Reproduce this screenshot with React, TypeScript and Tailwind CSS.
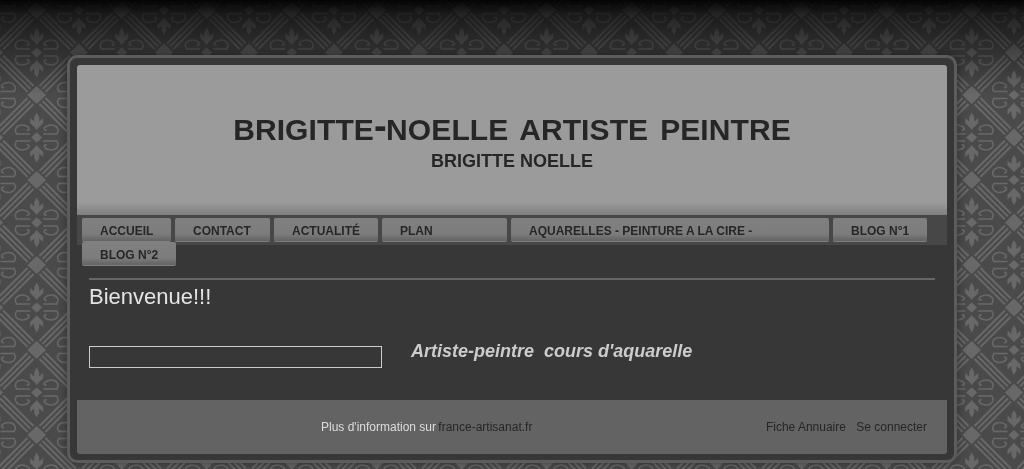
const font = "font-['Liberation_Sans',Arial,sans-serif]";

const menuItems = [
  { label: 'ACCUEIL', width: 'w-[89px]' },
  { label: 'CONTACT', width: 'w-[95px]' },
  { label: 'ACTUALITÉ', width: 'w-[104px]' },
  { label: 'PLAN', width: 'w-[125px]' },
  { label: 'AQUARELLES - PEINTURE A LA CIRE -', width: 'w-[318px]' },
  { label: 'BLOG N°1', width: 'w-[94px]' },
  { label: 'BLOG N°2', width: 'w-[94px]' },
];

const scroll =
  'M-6.5 -3.5 H-21 M-20 -4 C-22.5 -6 -21.5 -10 -18.5 -11.5 C-15 -13.2 -10 -12.5 -8 -10 C-6.8 -8.4 -8 -7 -10 -7.5';

function Ornament({ x, y }: { x: number; y: number }) {
  return (
    <g transform={`translate(${x} ${y})`} fill="#686868">
      <path d="M0 -25 L2.4 -20.5 L2.6 -16 L6.5 -19.5 L6.5 -14.5 L3 -11 L1.4 -9.5 L0 -7.5 L-1.4 -9.5 L-3 -11 L-6.5 -14.5 L-6.5 -19.5 L-2.6 -16 L-2.4 -20.5 Z" />
      <path d="M0 25 L2.4 20.5 L2.6 16 L6.5 19.5 L6.5 14.5 L3 11 L1.4 9.5 L0 7.5 L-1.4 9.5 L-3 11 L-6.5 14.5 L-6.5 19.5 L-2.6 16 L-2.4 20.5 Z" />
      <path d="M0 -5 L5.5 0 L0 5 L-5.5 0 Z" />
      <g fill="none" stroke="#686868" strokeWidth="1.6">
        <path d={scroll} />
        <path d={scroll} transform="scale(-1 1)" />
        <path d={scroll} transform="scale(1 -1)" />
        <path d={scroll} transform="scale(-1 -1)" />
      </g>
    </g>
  );
}

function Strips({ x, y, rot }: { x: number; y: number; rot: number }) {
  return (
    <g transform={`translate(${x} ${y}) rotate(${rot})`} fill="#686868">
      <rect x="-21.5" y="-5.2" width="43" height="2" />
      <rect x="-21.5" y="-1" width="43" height="2" />
      <rect x="-21.5" y="3.2" width="43" height="2" />
    </g>
  );
}

function Wallpaper() {
  return (
    <svg className="absolute inset-0 h-full w-full" aria-hidden="true">
      <defs>
        <pattern id="damask" x="-6" y="10" width="85" height="85" patternUnits="userSpaceOnUse">
          <rect width="85" height="85" fill="#4a4a4a" />
          <Strips x={21.3} y={21.2} rot={-45} />
          <Strips x={63.7} y={21.2} rot={45} />
          <Strips x={21.3} y={63.7} rot={45} />
          <Strips x={63.7} y={63.7} rot={-45} />
          <path d="M42.7 -9 L52 0 L42.7 9 L33.4 0 Z M42.7 76 L52 85 L42.7 94 L33.4 85 Z M0 33.5 L9 42.5 L0 51.5 L-9 42.5 Z M85 33.5 L94 42.5 L85 51.5 L76 42.5 Z" fill="#686868" />
          <Ornament x={42.7} y={42.5} />
          <Ornament x={0} y={0} />
          <Ornament x={85} y={0} />
          <Ornament x={0} y={85} />
          <Ornament x={85} y={85} />
        </pattern>
        <linearGradient id="fade" x1="0" y1="0" x2="0" y2="1">
          <stop offset="0" stopColor="#000" stopOpacity="0.95" />
          <stop offset="0.15" stopColor="#000" stopOpacity="0.65" />
          <stop offset="1" stopColor="#000" stopOpacity="0" />
        </linearGradient>
      </defs>
      <rect width="100%" height="100%" fill="url(#damask)" />
      <rect width="100%" height="95" fill="url(#fade)" />
    </svg>
  );
}

export default function App() {
  return (
    <div className={`relative h-[469px] w-[1024px] overflow-hidden grayscale ${font}`}>
      <Wallpaper />
      <div className="relative pt-[55px]">
        <div className="mx-auto h-[408px] w-[890px] rounded-[10px] border-[3px] border-[#5c5c5c] bg-[#373737] p-[7px] shadow-[0_0_10px_rgba(0,0,0,0.4)]">
          <header className="h-[150px] rounded-t-[3px] bg-[linear-gradient(#9b9b9b_0,#9b9b9b_137px,#7e7e7e_150px)] pt-[47px] text-center text-[#262626]">
            <h1 className="text-[30px] font-bold leading-[36px] tracking-[0.1px] [word-spacing:3.5px]">
              BRIGITTE<span className="align-[1px] text-[38px] leading-[0] tracking-[-0.5px]">-</span>NOELLE ARTISTE PEINTRE
            </h1>
            <h2 className="text-[18px] font-bold leading-[26px]">BRIGITTE NOELLE</h2>
          </header>

          <nav className="h-[30px] bg-[#474747]">
            <ul className="flex w-[860px] flex-wrap gap-x-[4px] pl-[5px] pt-[3px]">
              {menuItems.map((item) => (
                <li
                  key={item.label}
                  className={`h-[24px] ${item.width} rounded-[2px] border-b border-[#808080] bg-[linear-gradient(#808080_0,#7c7c7c_16px,#626262_23px)] pl-[18px] text-[12px] font-bold leading-[26px] text-[#262626]`}
                >
                  {item.label}
                </li>
              ))}
            </ul>
          </nav>

          <main className="h-[155px] px-[12px] pt-[33px]">
            <div className="h-[2px] bg-[#666]" />
            <h3 className="mt-[3px] text-[22px] leading-[27px] text-[#e4e4e4]">Bienvenue!!!</h3>
            <div className="mt-[31px] flex items-start">
              <div className="mt-[5px] h-[22px] w-[293px] border border-[#ccc]" />
              <p className="ml-[29px] whitespace-pre text-[18px] font-bold italic leading-[20px] text-[#ccc]">Artiste-peintre  cours d'aquarelle</p>
            </div>
          </main>

          <footer className="flex h-[54px] items-center rounded-b-[3px] bg-[#636363] pl-[244px] pr-[20px] text-[12px]">
            <p className="text-[#ddd]">
              Plus d'information sur <span className="-ml-[1px] text-[#262626]">france-artisanat.fr</span>
            </p>
            <p className="ml-auto text-[#262626]">Fiche Annuaire <span className="ml-[7px]">Se connecter</span></p>
          </footer>
        </div>
      </div>
    </div>
  );
}
